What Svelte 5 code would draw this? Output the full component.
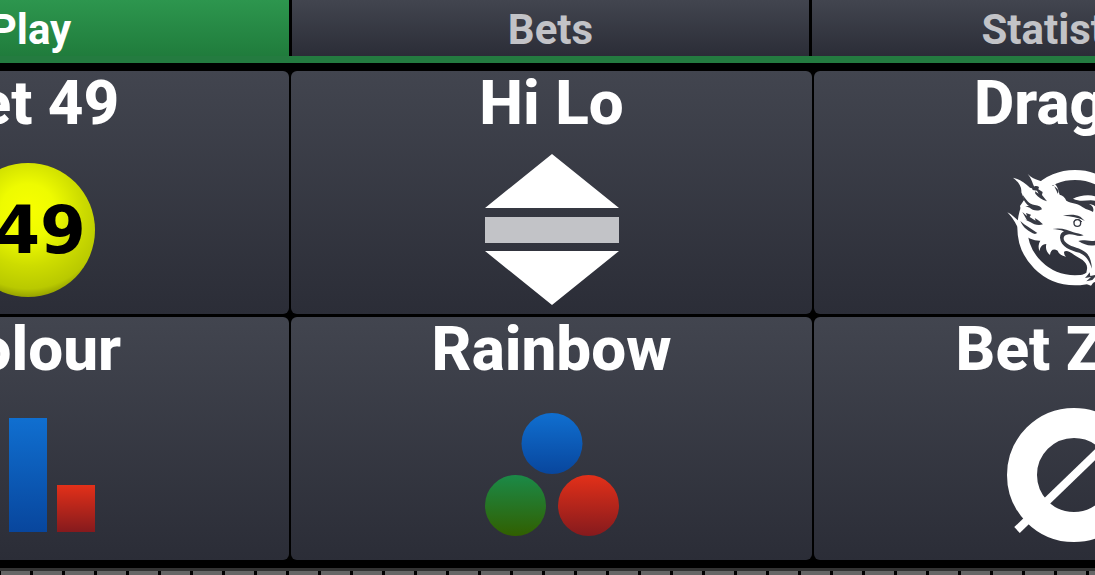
<script>
	const tabs = ['Play', 'Bets', 'Statistics'];
	const games = [
		{ name: 'Bet 49', icon: 'ball' },
		{ name: 'Hi Lo', icon: 'hilo' },
		{ name: 'Dragon', icon: 'dragon' },
		{ name: 'Colour', icon: 'bars' },
		{ name: 'Rainbow', icon: 'rainbow' },
		{ name: 'Bet Zero', icon: 'zero' }
	];
	let active = $state('Play');
</script>

<svg class="defs" aria-hidden="true">
	<defs>
		<linearGradient id="blue" x2="0" y2="1">
			<stop stop-color="#106fd0" />
			<stop offset="1" stop-color="#08469d" />
		</linearGradient>
		<linearGradient id="red" x2="0" y2="1">
			<stop stop-color="#e33019" />
			<stop offset="1" stop-color="#851a1d" />
		</linearGradient>
		<linearGradient id="green" x2="0" y2="1">
			<stop stop-color="#1b8a48" />
			<stop offset="1" stop-color="#315f00" />
		</linearGradient>
		<radialGradient id="yellow" cx=".5" cy=".36" r=".68">
			<stop stop-color="#f8ff00" />
			<stop offset=".3" stop-color="#eefb00" />
			<stop offset=".6" stop-color="#cddc00" />
			<stop offset=".85" stop-color="#b9c900" />
			<stop offset="1" stop-color="#7f8a00" />
		</radialGradient>
	</defs>
</svg>

<main>
	<nav class="tabs">
		{#each tabs as tab}
			<button class="tab" class:active={active === tab} onclick={() => (active = tab)}>{tab}</button>
		{/each}
	</nav>

	<div class="games">
		{#each games as game}
			<button class="game">
				<span class="name">{game.name}</span>
				<svg class="icon" viewBox="0 0 160 160" aria-hidden="true">
					{#if game.icon === 'ball'}
						<circle cx="79" cy="80" r="67" fill="url(#yellow)" />
						<text class="ball-number" x="137" y="103" text-anchor="end">49</text>
					{:else if game.icon === 'hilo'}
						<path d="M80 4l67 54H13zM13 101h134l-67 54z" fill="#fff" />
						<path d="M13 67h134v26H13z" fill="#c2c3c7" />
					{:else if game.icon === 'dragon'}
						<g transform="translate(0 5) scale(.3333)">
							<circle cx="240" cy="218" r="158" fill="none" stroke="#fff" stroke-width="30" />
							<!-- head and mane -->
							<path
								d="M98 57C118 78 142 76 164 90C176 98 180 88 176 84C190 94 190 108 194 119C203 121 210 127 214 137C229 147 248 143 262 156C277 166 288 166 294 171C298 160 292 151 282 148C300 148 314 162 310 180L360 205L366 246L338 266L350 300L318 352L288 392L260 382L282 375L256 364L274 353L276 343C280 320 254 310 238 300C222 287 211 286 207 291C208 299 209 302 213 305C202 303 191 296 188 287C176 279 166 285 165 300C154 290 151 280 154 267C139 269 135 277 134 289C129 279 130 268 136 257C118 258 96 248 84 237C65 220 64 199 37 172C56 181 63 194 79 203L82 181L75 153L88 134L79 112C81 94 68 79 54 68C76 72 91 86 105 98L122 103C112 88 112 73 98 57z"
								fill="#fff"
							/>
							<path d="M234 131C252 122 280 117 302 124L324 135L304 139C285 129 262 145 234 131z" fill="#fff" />
							<!-- gaps in the mane, mouth and brow -->
							<g fill="#373a44">
								<path d="M111 99C120 91 126 92 132 96L130 103L143 111L141 120L156 139C140 134 130 127 121 116L120 109L131 116L126 107L113 105z" />
								<path d="M84 121C94 134 101 148 119 150C130 151 139 155 141 163C125 171 111 164 104 158L91 153L102 153C91 145 84 135 84 121z" />
								<path d="M82 171L96 183L93 174L108 179L104 186L122 197L119 189C130 195 137 201 144 208C130 213 116 208 107 202L88 193L96 196z" />
								<path d="M76 198C90 212 110 221 127 234L120 237C102 231 85 219 76 198z" />
								<path d="M172 222C198 217 219 225 235 232C247 236 255 236 266 241C250 247 237 237 222 238C207 239 202 248 209 259C225 278 247 275 267 289C283 298 289 316 291 341C283 317 271 300 253 293C228 287 197 276 195 248C195 238 200 232 207 229C196 224 184 223 172 222z" />
								<path d="M250 258C268 251 284 263 309 255L304 270C282 275 269 269 250 258z" />
								<path d="M204 182C225 178 240 178 256 185L270 198C251 187 227 184 204 182z" />
								<path d="M178 94L184 99C193 106 191 112 188 116C184 106 181 101 178 94z" />
								<path d="M278 360L270 369L288 366L274 379L292 375L300 366V360L286 363L284 352z" />
							</g>
							<circle cx="247" cy="204" r="10" fill="#fff" stroke="#373a44" stroke-width="4" />
							<path d="M236 202C241 191 252 191 261 201" fill="none" stroke="#373a44" stroke-width="3" />
						</g>
					{:else if game.icon === 'bars'}
						<path d="M12 58h38v78H12z" fill="url(#green)" />
						<path d="M60 22h38v114H60z" fill="url(#blue)" />
						<path d="M108 89h38v47h-38z" fill="url(#red)" />
					{:else if game.icon === 'rainbow'}
						<circle cx="80" cy="47.5" r="30.5" fill="url(#blue)" />
						<circle cx="43.5" cy="109.5" r="30.5" fill="url(#green)" />
						<circle cx="116.5" cy="109.5" r="30.5" fill="url(#red)" />
					{:else}
						<circle cx="79" cy="79" r="52" fill="none" stroke="#fff" stroke-width="30" />
						<path d="M22 134L136 24" stroke="#fff" stroke-width="8" />
					{/if}
				</svg>
			</button>
		{/each}
	</div>

	<div class="track"></div>
</main>

<style>
	:global(body) {
		margin: 0;
		background: #000;
	}

	.defs {
		position: absolute;
		width: 0;
		height: 0;
	}

	main {
		overflow: hidden;
	}

	button {
		padding: 0;
		border: 0;
		cursor: pointer;
	}

	.tabs {
		display: grid;
		grid-template-columns: repeat(3, 1fr);
		gap: 3px;
		margin: 0 -234px 0 -228px;
		border-bottom: 7px solid #247b40;
	}

	.tab {
		height: 56px;
		padding-top: 4px;
		background: linear-gradient(#42454f, #2b2d37);
		color: #c2c3c7;
		font: 700 42px/52px Roboto, sans-serif;
	}

	.tab.active {
		background: linear-gradient(#2d964e, #207c3c);
		color: #fff;
	}

	.games {
		display: grid;
		grid-template-columns: repeat(3, 1fr);
		gap: 3px 2px;
		margin: 8px -240px 8px -232px;
	}

	.game {
		display: flex;
		flex-direction: column;
		align-items: center;
		height: 243px;
		border-radius: 6px;
		background: linear-gradient(#42454f, #2b2d37);
		color: #fff;
	}

	.name {
		margin-bottom: 15px;
		font: 800 62px/64px Roboto, sans-serif;
	}

	.icon {
		width: 160px;
		height: 160px;
	}

	.ball-number {
		font: 700 66px 'DejaVu Sans', sans-serif;
	}

	.track {
		height: 4px;
		border-top: 3px solid #333;
		background: repeating-linear-gradient(90deg, #000 0 1px, #666 1px 30px, #000 30px 32px);
	}
</style>
